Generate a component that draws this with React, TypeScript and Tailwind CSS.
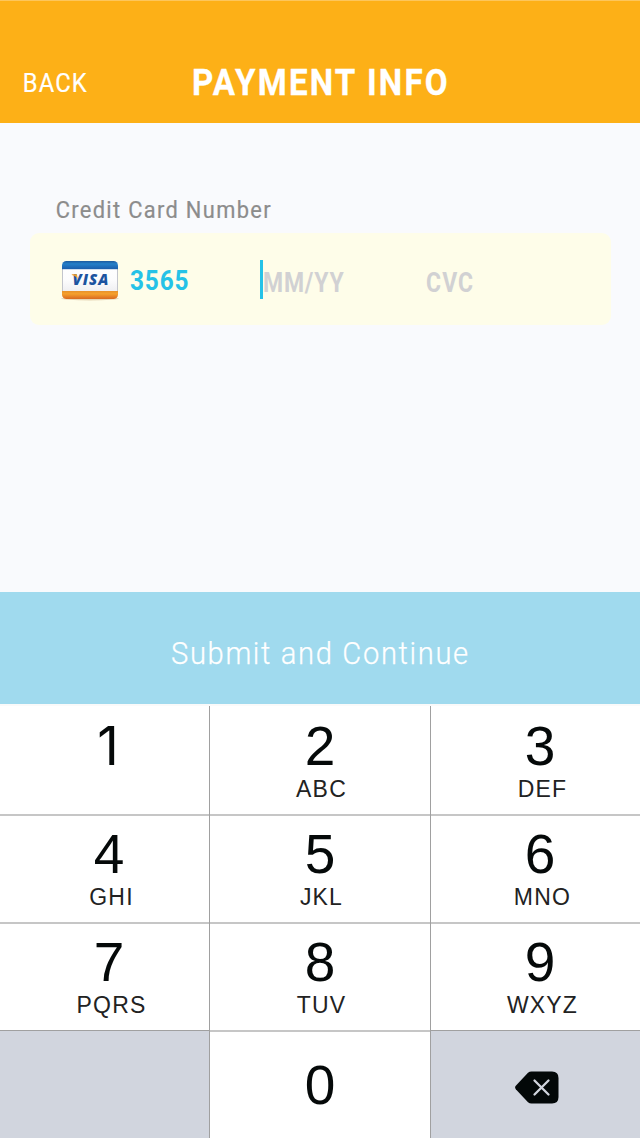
type Key = { digit: string; letters?: string };

const rows: Key[][] = [
  [{ digit: '1' }, { digit: '2', letters: 'ABC' }, { digit: '3', letters: 'DEF' }],
  [{ digit: '4', letters: 'GHI' }, { digit: '5', letters: 'JKL' }, { digit: '6', letters: 'MNO' }],
  [{ digit: '7', letters: 'PQRS' }, { digit: '8', letters: 'TUV' }, { digit: '9', letters: 'WXYZ' }],
];

// Cell widths and the nudge that centres each column's glyphs.
const columns = [
  'w-[210px] border-r border-[#a0a0a0] pl-[9px]',
  'w-[221px] border-r border-[#a0a0a0]',
  'w-[209px] pl-[9px]',
];

const letterInsets = ['pl-[5px]', 'pl-[3px]', 'pl-[5px]'];

function VisaCard() {
  return (
    <svg width="60" height="42" viewBox="0 0 60 42" className="mt-[3px] shrink-0">
      <defs>
        <linearGradient id="blue" x1="0" y1="0" x2="0" y2="1">
          <stop offset="0" stopColor="#1d5a9e" />
          <stop offset="0.35" stopColor="#2580c8" />
          <stop offset="1" stopColor="#1b5dab" />
        </linearGradient>
        <linearGradient id="orange" x1="0" y1="0" x2="0" y2="1">
          <stop offset="0" stopColor="#e8912a" />
          <stop offset="0.35" stopColor="#f5a12c" />
          <stop offset="1" stopColor="#d9691f" />
        </linearGradient>
        <linearGradient id="face" x1="0" y1="0" x2="0" y2="1">
          <stop offset="0" stopColor="#ffffff" />
          <stop offset="0.5" stopColor="#fcfcfd" />
          <stop offset="1" stopColor="#e6e6ea" />
        </linearGradient>
        <clipPath id="card">
          <rect x="2" y="1" width="56" height="38" rx="4.5" />
        </clipPath>
      </defs>
      <ellipse cx="30" cy="38.6" rx="29" ry="1.8" fill="#b98e5a" opacity="0.35" />
      <g clipPath="url(#card)">
        <rect x="2" y="1" width="56" height="38" fill="url(#face)" />
        <path d="M2.5 9v22M57.5 9v22" stroke="#c3c5cc" />
        <rect x="2" y="1" width="56" height="8.2" fill="url(#blue)" />
        <rect x="2" y="31" width="56" height="8" fill="url(#orange)" />
      </g>
      <text
        x="12.5"
        y="25.2"
        textLength="36"
        fontFamily="Open Sans, sans-serif"
        fontSize="15"
        fontWeight="800"
        fontStyle="italic"
        fill="#1c54a0"
      >
        VISA
      </text>
      <path d="M11.800 14.2H16.900L18 20C17.200 17.400 15.200 15.600 11.800 14.900z" fill="#f2a02c" />
    </svg>
  );
}

function DeleteIcon() {
  return (
    <svg width="45" height="33" viewBox="0 0 45 33">
      <path
        d="M16.500 .5H37Q43.500 .5 43.500 7V26Q43.500 32.500 37 32.500H16.500Q14.500 32.500 13 31.200L.8 18.200Q-.6 16.500 .8 14.800L13 1.800Q14.500 .5 16.500 .5z"
        fill="#030808"
      />
      <path d="M19.500 9.500L33.500 23.500M33.500 9.500L19.500 23.500" stroke="#d1d5de" strokeWidth="2.300" strokeLinecap="round" />
    </svg>
  );
}

export default function App() {
  return (
    <main className="flex h-[1138px] w-[640px] flex-col overflow-hidden bg-[#f9fafd] font-[Roboto,sans-serif]">
      <header className="flex h-[123px] shrink-0 border-t border-[#fdc65b] bg-[#fdb017] pt-[59px] text-white">
        <button className="h-12 w-[192px] origin-left scale-x-95 pl-[24px] text-left text-[25px] leading-[48px] tracking-[1.200px] [-webkit-text-stroke:0.2px_white]">
          BACK
        </button>
        <h1 className="h-12 origin-left scale-x-92 text-[36px] leading-[46px] font-bold tracking-[2.350px] whitespace-nowrap [-webkit-text-stroke:0.3px_white]">
          PAYMENT INFO
        </h1>
      </header>

      <section className="flex h-[469px] shrink-0 flex-col px-[30px] pt-[70px]">
        <label className="h-10 w-[240px] origin-left scale-x-95 pl-[27px] text-[23px] leading-[35px] tracking-[1.400px] whitespace-nowrap text-[#8c8c8c] [-webkit-text-stroke:0.2px_#8c8c8c]">
          Credit Card Number
        </label>
        <div className="flex h-[92px] w-[581px] items-center rounded-[9px] bg-[#fefde9] pl-[30px] text-[28px] font-bold">
          <VisaCard />
          <span className="mt-[3px] ml-[10px] w-[130px] origin-left scale-x-87 leading-10 tracking-[1px] text-[#25c2e7]">
            3565
          </span>
          <span className="h-[39px] w-[3px] bg-[#25c2e7]" />
          <span className="mt-[7px] w-[163px] origin-left scale-x-82 leading-10 tracking-[1px] text-[#d1d1d3]">
            MM/YY
          </span>
          <span className="mt-[7px] origin-left scale-x-82 leading-10 tracking-[1.350px] text-[#d1d1d3]">CVC</span>
        </div>
      </section>

      <button className="flex h-[112px] shrink-0 items-center bg-[#a0daee] pt-[12px] pl-[171px] text-[31px] font-light text-white">
        <span className="origin-left scale-x-94 tracking-[1.750px] whitespace-nowrap [-webkit-text-stroke:0.25px_white]">
          Submit and Continue
        </span>
      </button>

      <div className="h-0.5 shrink-0 bg-[#fafafa]" />

      <section className="flex flex-col bg-white font-['Liberation_Sans',Arial,sans-serif] text-[#050909]">
        {rows.map((row, r) => (
          <div key={r} className="flex h-[108px] not-first:shadow-[inset_0_2px_0_#c6c6c6]">
            {row.map((key, c) => (
              <button key={key.digit} className={`flex flex-col items-center pt-[10px] ${columns[c]}`}>
                {key.digit === '1' ? (
                  <span className="h-[60px] pr-[2px] font-[Inter,sans-serif] text-[53px] leading-[60px]">1</span>
                ) : (
                  <span className="h-[60px] text-[55px] leading-[60px]">{key.digit}</span>
                )}
                <span className={`text-[23px] leading-[26px] tracking-[1.200px] text-[#222] ${letterInsets[c]}`}>
                  {key.letters}
                </span>
              </button>
            ))}
          </div>
        ))}
        <div className="flex h-[108px]">
          <div className="w-[210px] border-t border-r border-[#a0a0a0] bg-[#d1d5de]" />
          <button className="w-[221px] border-r border-[#a0a0a0] pt-[24px] shadow-[inset_0_2px_0_#c6c6c6]">
            <span className="block h-[84px] text-[55px] leading-[62px]">0</span>
          </button>
          <button className="flex w-[209px] justify-center border-t border-[#a0a0a0] bg-[#d1d5de] pt-[40px] pl-[3px]">
            <DeleteIcon />
          </button>
        </div>
      </section>
    </main>
  );
}
